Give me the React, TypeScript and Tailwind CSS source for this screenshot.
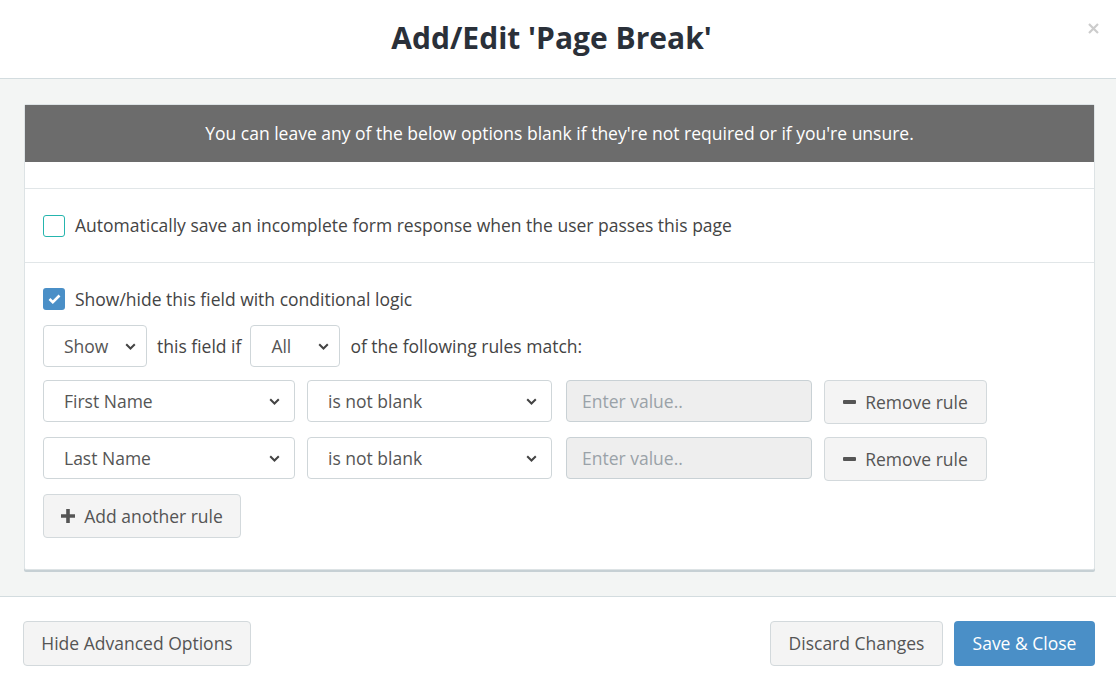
import { ReactNode } from 'react';

const font = { fontFamily: '"Open Sans", "Noto Sans", sans-serif' };

function Chevron() {
  return (
    <svg width="11" height="7" viewBox="0 0 11 7" className="shrink-0">
      <path d="M1.2 1.2 5.5 5.5l4.3-4.3" fill="none" stroke="#444" strokeWidth="2" />
    </svg>
  );
}

function Select({ label, className }: { label: string; className: string }) {
  return (
    <div
      className={`flex items-center justify-between rounded-[4px] border border-[#cfd6d9] bg-white text-[17.5px] text-[#555] ${className}`}
    >
      <span>{label}</span>
      <Chevron />
    </div>
  );
}

function GrayButton({ children, className }: { children: ReactNode; className: string }) {
  return (
    <button
      className={`flex items-center justify-center rounded-[4px] border border-[#d3d9dc] bg-[#f4f4f4] text-[17.5px] text-[#555] ${className}`}
    >
      {children}
    </button>
  );
}

function MinusIcon() {
  return <span className="mr-[9px] inline-block h-[4px] w-[13px] rounded-[1px] bg-[#555]" />;
}

function PlusIcon() {
  return (
    <svg width="14" height="14" viewBox="0 0 14 14" className="mr-[9px]">
      <path d="M5.2 0h3.6v5.2H14v3.6H8.8V14H5.2V8.8H0V5.2h5.2z" fill="#555" />
    </svg>
  );
}

function RuleRow({ field }: { field: string }) {
  return (
    <div className="flex items-start">
      <Select label={field} className="h-[42px] w-[252px] pl-5 pr-[14px]" />
      <Select label="is not blank" className="ml-[12px] h-[42px] w-[245px] pl-5 pr-[14px]" />
      <div className="ml-[14px] flex h-[42px] w-[246px] items-center rounded-[4px] border border-[#c9d1d5] bg-[#eeeeee] pl-[15px] text-[17.5px] text-[#9aa2a8]">
        Enter value..
      </div>
      <GrayButton className="ml-[12px] h-[44px] w-[163px]">
        <MinusIcon />
        Remove rule
      </GrayButton>
    </div>
  );
}

export default function App() {
  return (
    <div className="flex h-[691px] w-[1116px] flex-col bg-white" style={font}>
      {/* Header */}
      <div className="relative flex h-[79px] shrink-0 items-center justify-center border-b border-[#d3dcdf] pb-[3px] pr-[13px]">
        <h1 className="text-[30px] font-bold leading-none text-[#2a3039]">Add/Edit 'Page Break'</h1>
        <svg width="11" height="11" viewBox="0 0 11 11" className="absolute right-[17px] top-[23px]">
          <path d="M1 1l9 9M10 1l-9 9" stroke="#cccccc" strokeWidth="2.2" />
        </svg>
      </div>

      {/* Body */}
      <div className="flex h-[518px] shrink-0 flex-col border-b border-[#d3dcdf] bg-[#f3f5f4] pl-[24px] pr-[21px] pt-[25px]">
        <div className="rounded-[2px] border border-[#dde3e5] bg-white shadow-[0_2px_0_#c6d0d4]">
          <div className="flex h-[57px] items-center justify-center bg-[#6c6c6c] text-[17.5px] text-white">
            You can leave any of the below options blank if they're not required or if you're unsure.
          </div>
          <div className="h-[27px] border-b border-[#e1e6e8]" />
          <div className="flex h-[74px] items-center border-b border-[#e1e6e8] pl-[18px]">
            <span className="mr-[10px] h-[22px] w-[22px] rounded-[3px] border border-[#25b5ae] bg-white" />
            <span className="text-[17.5px] text-[#444]">
              Automatically save an incomplete form response when the user passes this page
            </span>
          </div>
          <div className="flex flex-col pb-[31px] pl-[18px] pt-[25px]">
            <div className="flex h-[22px] items-center">
              <span className="mr-[10px] flex h-[22px] w-[22px] items-center justify-center rounded-[3px] bg-[#4a8fc7]">
                <svg width="13" height="10" viewBox="0 0 13 10">
                  <path d="M1.5 5l3.3 3.2L11.5 1.5" fill="none" stroke="white" strokeWidth="2.6" />
                </svg>
              </span>
              <span className="text-[17.5px] text-[#444]">Show/hide this field with conditional logic</span>
            </div>
            <div className="mt-[15px] flex items-center text-[17.5px] text-[#444]">
              <Select label="Show" className="h-[42px] w-[104px] pl-5 pr-[10px]" />
              <span className="ml-[10px]">this field if</span>
              <Select label="All" className="ml-[9px] h-[42px] w-[90px] pl-5 pr-[10px]" />
              <span className="ml-[10px]">of the following rules match:</span>
            </div>
            <div className="mt-[13px] flex flex-col gap-[13px]">
              <RuleRow field="First Name" />
              <RuleRow field="Last Name" />
            </div>
            <GrayButton className="mt-[13px] h-[44px] w-[198px]">
              <PlusIcon />
              Add another rule
            </GrayButton>
          </div>
        </div>
      </div>

      {/* Footer */}
      <div className="flex items-start justify-between px-[21px] pt-[24px]">
        <GrayButton className="ml-[2px] h-[45px] w-[228px]">Hide Advanced Options</GrayButton>
        <div className="flex gap-[11px]">
          <GrayButton className="h-[45px] w-[173px]">Discard Changes</GrayButton>
          <button className="h-[45px] w-[141px] rounded-[4px] bg-[#4a8fc7] text-[17.5px] text-white">
            Save &amp; Close
          </button>
        </div>
      </div>
    </div>
  );
}
